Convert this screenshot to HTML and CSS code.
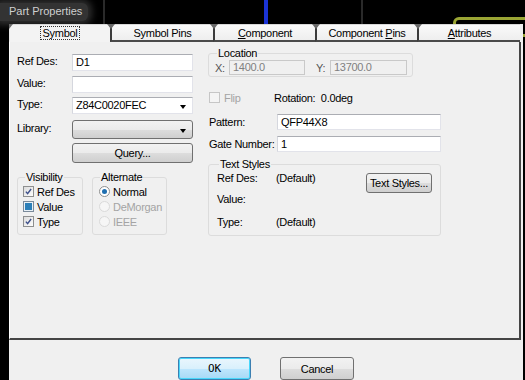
FILE: index.html
```html
<!DOCTYPE html>
<html lang="en">
<head>
    <meta charset="UTF-8">
    <title>Part Properties</title>
    <link rel="stylesheet" href="styles.css">
</head>
<body>
    <div class="topbar">
        <span class="app-title">Part Properties</span>
        <i class="trace trace-grey" style="left:103px"></i>
        <i class="trace trace-blue" style="left:264px"></i>
        <i class="trace trace-grey" style="left:361px"></i>
        <i class="trace-outline"></i>
    </div>

    <div class="workspace">
        <div class="left-strip"></div>

        <div class="dialog">
            <div class="tabs">
                <div class="tab tab-first active"><span class="focus">Symbol</span></div>
                <div class="tab w103">Symbol Pins</div>
                <div class="tab"><u>C</u>omponent</div>
                <div class="tab">Component <u>P</u>ins</div>
                <div class="tab w103"><u>A</u>ttributes</div>
            </div>

            <div class="panel">
                <!-- left column: names and visibility -->
                <div class="col-left">
                    <div class="row">
                        <span class="lbl">Ref Des:</span>
                        <div class="input">D1</div>
                    </div>
                    <div class="row row-value">
                        <span class="lbl">Value:</span>
                        <div class="input"></div>
                    </div>
                    <div class="row row-type">
                        <span class="lbl">Type:</span>
                        <div class="input combo">Z84C0020FEC<span class="arrow"></span></div>
                    </div>
                    <div class="row row-lib">
                        <span class="lbl">Library:</span>
                        <div class="combo-btn"><span class="arrow"></span></div>
                    </div>
                    <div class="row row-query">
                        <span class="lbl"></span>
                        <button class="btn btn-query">Query...</button>
                    </div>

                    <div class="groups">
                        <fieldset class="group group-vis">
                            <legend>Visibility</legend>
                            <div class="opt"><span class="check"><svg viewBox="0 0 11 11"><path d="M2.3 5.6 L4.4 8.2 L8.7 2.4"/></svg></span>Ref Des</div>
                            <div class="opt"><span class="check mixed"></span>Value</div>
                            <div class="opt"><span class="check"><svg viewBox="0 0 11 11"><path d="M2.3 5.6 L4.4 8.2 L8.7 2.4"/></svg></span>Type</div>
                        </fieldset>
                        <fieldset class="group group-alt">
                            <legend>Alternate</legend>
                            <div class="opt"><span class="radio on"></span>Normal</div>
                            <div class="opt disabled"><span class="radio"></span>DeMorgan</div>
                            <div class="opt disabled"><span class="radio"></span>IEEE</div>
                        </fieldset>
                    </div>
                </div>

                <!-- right column: placement and text styles -->
                <div class="col-right">
                    <fieldset class="group group-loc">
                        <legend>Location</legend>
                        <div class="loc-row">
                            <span class="axis">X:</span>
                            <div class="input readonly w-x">1400.0</div>
                            <span class="axis axis-y">Y:</span>
                            <div class="input readonly w-y">13700.0</div>
                        </div>
                    </fieldset>

                    <div class="flip-row">
                        <span class="check off"></span>
                        <span class="flip">Flip</span>
                        <span class="rotation">Rotation:&nbsp; 0.0deg</span>
                    </div>

                    <div class="row2 row-pattern">
                        <span class="lbl2">Pattern:</span>
                        <div class="input wide">QFP44X8</div>
                    </div>
                    <div class="row2 row-gate">
                        <span class="lbl2">Gate Number:</span>
                        <div class="input wide">1</div>
                    </div>

                    <fieldset class="group group-ts">
                        <legend>Text Styles</legend>
                        <div class="ts-row ts-first">
                            <span class="ts-lbl">Ref Des:</span>
                            <span class="ts-val">(Default)</span>
                            <button class="btn btn-ts">Text Styles...</button>
                        </div>
                        <div class="ts-row">
                            <span class="ts-lbl">Value:</span>
                        </div>
                        <div class="ts-row ts-last">
                            <span class="ts-lbl">Type:</span>
                            <span class="ts-val">(Default)</span>
                        </div>
                    </fieldset>
                </div>
            </div>

            <div class="footer">
                <button class="btn btn-ok">OK</button>
                <button class="btn btn-cancel">Cancel</button>
            </div>
        </div>
    </div>
</body>
</html>
```

FILE: styles.css
```css
* {
    box-sizing: border-box;
}
body {
    margin: 0;
    width: 525px;
    height: 380px;
    overflow: hidden;
    background: #000;
    font-family: 'Liberation Sans', Arial, sans-serif;
    font-size: 11px;
    letter-spacing: -0.3px;
    color: #000;
    white-space: nowrap;
}

/* CAD canvas behind the dialog */
.topbar {
    position: relative;
    height: 24px;
}
.app-title {
    display: inline-block;
    margin-top: 3px;
    padding: 2px 6px 3px 9px;
    background: #333;
    box-shadow: 0 0 7px 4px #2e2e2e;
    border-radius: 0 6px 6px 0;
    color: #cfcfcf;
    line-height: 13px;
    letter-spacing: 0;
}
.trace {
    position: absolute;
    top: 0;
    height: 24px;
}
.trace-grey {
    width: 2px;
    background: #2a2a2a;
}
.trace-blue {
    width: 4px;
    background: #1b34d6;
}
.trace-outline {
    position: absolute;
    left: 453px;
    top: 17px;
    width: 80px;
    height: 20px;
    border: 3px solid #9aa534;
    border-radius: 6px;
}

.workspace {
    display: flex;
    height: 356px;
}
.left-strip {
    width: 9px;
    background: #000;
}

.dialog {
    width: 514px;
    background: #f0f0f0;
    display: flex;
    flex-direction: column;
    position: relative;
}

/* tabs */
.tabs {
    display: flex;
    height: 18px;
    width: 511px;
}
.tab {
    position: relative;
    width: 102px;
    text-align: center;
    line-height: 17px;
    background: linear-gradient(#fafafa, #eeeeee);
    border-left: 2px solid #3c3c3c;
    border-bottom: 2px solid #4a4a4a;
    border-top: 1px solid #d8d8d8;
}
.tab::before {
    content: "";
    position: absolute;
    left: -5px;
    top: -1px;
    border-left: 4px solid transparent;
    border-right: 4px solid transparent;
    border-top: 5px solid #6a6a6a;
}
.tab-first {
    width: 101px;
    border-left: 1px solid #e8e8e8;
}
.tab-first::before {
    left: -1px;
    border-left: 0;
}
.w103 {
    width: 103px;
}
.tab.active {
    border-bottom-color: transparent;
    background: #f3f3f3;
}
.focus {
    outline: 1px dotted #333;
    outline-offset: 0;
    padding: 0 2px;
}
.tab u {
    text-decoration: underline;
}

/* main panel */
.panel {
    height: 302px;
    margin-right: 2px;
    border-left: 1px solid #fff;
    border-right: 2px solid #454545;
    border-bottom: 2px solid #454545;
    display: flex;
    gap: 15px;
    padding: 5px 0 0 7px;
}
.col-left {
    width: 176px;
    padding-top: 7px;
    display: flex;
    flex-direction: column;
}
.col-right {
    width: 233px;
    display: flex;
    flex-direction: column;
}
.row {
    display: flex;
    align-items: center;
    height: 17px;
}
.row-value { margin-top: 5px; }
.row-type { margin-top: 4px; }
.row-lib { margin-top: 6px; height: 19px; }
.row-query { margin-top: 4px; height: 20px; }
.lbl {
    width: 55px;
    flex-shrink: 0;
    margin-top: -3px;
}

.input {
    position: relative;
    flex: 1;
    height: 100%;
    background: #fff;
    border: 1px solid #e2e3ea;
    border-top-color: #abadb3;
    border-left-color: #d5d7de;
    padding-left: 3px;
    line-height: 15px;
}
.arrow {
    position: absolute;
    right: 6px;
    top: 7px;
    border-left: 3px solid transparent;
    border-right: 3px solid transparent;
    border-top: 4px solid #000;
}
.combo-btn {
    position: relative;
    flex: 1;
    height: 100%;
    border: 1px solid #707070;
    border-radius: 3px;
    background: linear-gradient(#f2f2f2 0%, #ebebeb 50%, #dddddd 51%, #cfcfcf 100%);
}
.combo-btn .arrow {
    top: 8px;
}

.btn {
    font-family: 'Liberation Sans', Arial, sans-serif;
    font-size: 11px;
    letter-spacing: -0.3px;
    color: #000;
    padding: 0;
    border: 1px solid #707070;
    border-radius: 3px;
    background: linear-gradient(#f2f2f2 0%, #ebebeb 50%, #dddddd 51%, #cfcfcf 100%);
}
.btn-query {
    flex: 1;
    height: 20px;
}

/* group boxes */
.group {
    margin: 0;
    border: 1px solid #dcdcdc;
    border-radius: 3px;
    padding: 0 4px 5px 5px;
}
.group legend {
    padding: 0 1px;
    margin-left: 2px;
    line-height: 13px;
}
.groups {
    display: flex;
    gap: 9px;
    margin-top: 8px;
}
.group-vis { width: 66px; }
.group-alt { width: 75px; }
.opt {
    display: flex;
    align-items: center;
    gap: 3px;
    height: 15px;
}
.opt.disabled {
    color: #a4a4a4;
}
.check {
    width: 11px;
    height: 11px;
    border: 1px solid #8e8f8f;
    background: linear-gradient(135deg, #dcdcdc, #fdfdfd);
    display: inline-flex;
    flex-shrink: 0;
}
.check svg {
    width: 9px;
    height: 9px;
}
.check path {
    fill: none;
    stroke: #3d4f8a;
    stroke-width: 1.7;
}
.check.mixed {
    border-color: #7a8a9a;
    background: #2c7fb8;
    box-shadow: inset 0 0 0 1px #e8f0f6;
}
.check.off {
    border-color: #c6c6c6;
    background: #f4f4f4;
}
.radio {
    width: 11px;
    height: 11px;
    border-radius: 50%;
    border: 1px solid #dadada;
    background: #f6f6f6;
    flex-shrink: 0;
    margin-left: 1px;
    position: relative;
}
.radio.on {
    border-color: #8e8f8f;
    background: #fff;
}
.radio.on::after {
    content: "";
    position: absolute;
    left: 2px;
    top: 2px;
    width: 5px;
    height: 5px;
    border-radius: 50%;
    background: #1f6fb0;
}

/* right column */
.group-loc {
    width: 205px;
    padding: 0 4px 1px 6px;
}
.loc-row {
    display: flex;
    align-items: center;
    height: 15px;
}
.axis {
    width: 14px;
    color: #555;
}
.axis-y {
    margin-left: 11px;
}
.input.readonly {
    flex: none;
    background: #f0f0f0;
    border-color: #c9c9c9;
    color: #808080;
    line-height: 13px;
}
.w-x { width: 76px; }
.w-y { width: 77px; }

.flip-row {
    display: flex;
    align-items: center;
    height: 13px;
    margin-top: 14px;
    padding-left: 1px;
}
.flip {
    margin-left: 4px;
    width: 50px;
    color: #a4a4a4;
}

.row2 {
    display: flex;
    align-items: center;
    height: 16px;
}
.row-pattern { margin-top: 10px; }
.row-gate { margin-top: 6px; }
.lbl2 {
    width: 69px;
    padding-left: 1px;
    flex-shrink: 0;
}
.input.wide {
    flex: none;
    width: 164px;
    line-height: 14px;
}

.group-ts {
    margin-top: 6px;
    padding: 0 8px 6px 8px;
}
.ts-row {
    display: flex;
    height: 14px;
    line-height: 14px;
}
.ts-first {
    height: 21px;
}
.ts-last {
    margin-top: 9px;
}
.ts-lbl {
    width: 59px;
}
.ts-val {
    width: 90px;
}
.btn-ts {
    width: 66px;
    height: 20px;
    margin-top: 2px;
}

/* bottom buttons */
.footer {
    flex: 1;
    display: flex;
    justify-content: center;
    gap: 29px;
    padding-top: 17px;
}
.btn-ok,
.btn-cancel {
    width: 73px;
    height: 23px;
}
.btn-cancel {
    width: 74px;
}
.btn-ok {
    border: 1px solid #3c7fb1;
    box-shadow: inset 0 0 0 1px #48d7fb;
    background: linear-gradient(#eaf6fd 0%, #d9f0fc 50%, #bee6fd 51%, #a7d9f5 100%);
    font-family: 'DejaVu Sans Mono', monospace;
    letter-spacing: 0;
}
```
